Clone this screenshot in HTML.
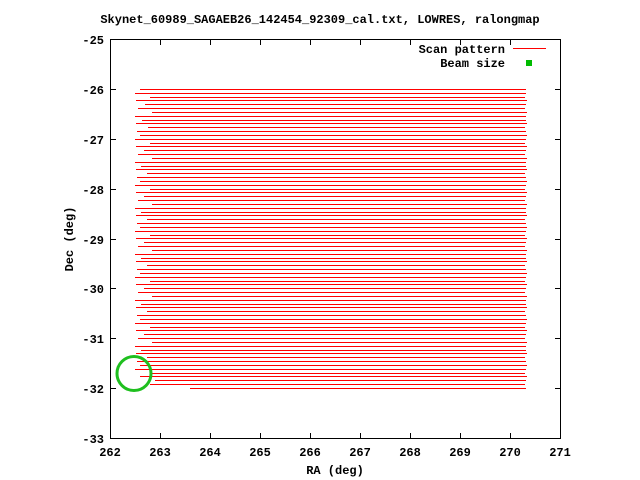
<!DOCTYPE html>
<html><head><style>
html,body{margin:0;padding:0;background:#fff;}
svg{display:block;}
text{font-family:"Liberation Mono","DejaVu Sans Mono",monospace;font-weight:bold;font-size:12px;fill:#000;}
</style></head><body>
<svg width="640" height="480" xmlns="http://www.w3.org/2000/svg">
<text x="320" y="23" text-anchor="middle" font-size="11">Skynet_60989_SAGAEB26_142454_92309_cal.txt, LOWRES, ralongmap</text>
<path stroke="#f00" stroke-width="1" fill="none" d="
M140 89.5H526M135 93.5H526M150 97.5H525M136 100.5H527M145 104.5H526M138 108.5H525M152 112.5H527M135 116.5H526M142 120.5H526M136 123.5H527
M148 127.5H525M137 131.5H526M140 135.5H527M135 139.5H526M150 143.5H525M136 146.5H527M144 150.5H526M138 154.5H525M152 158.5H527M135 162.5H526
M141 166.5H526M136 169.5H527M147 173.5H525M137 177.5H526M140 181.5H527M135 185.5H526M150 189.5H525M136 192.5H527M144 196.5H526M138 200.5H525
M152 204.5H527M135 208.5H526M141 212.5H526M136 215.5H527M147 219.5H525M137 223.5H526M140 227.5H527M135 231.5H526M150 235.5H525M136 238.5H527
M144 242.5H526M138 246.5H525M152 250.5H527M135 254.5H526M141 258.5H526M136 261.5H527M147 265.5H525M137 269.5H526M140 273.5H527M135 277.5H526
M150 281.5H525M136 284.5H527M144 288.5H526M138 292.5H525M152 296.5H527M135 300.5H526M141 304.5H526M136 307.5H527M147 311.5H525M137 315.5H526
M140 319.5H527M135 323.5H526M150 327.5H525M136 330.5H527M144 334.5H526M138 338.5H525M152 342.5H527M135 346.5H526M141 350.5H526M136 353.5H527
M147 357.5H525M137 361.5H526M140 365.5H527M135 369.5H526M150 373.5H525M140 376.5H527M155 380.5H526M150 384.5H525M190 388.5H526"/>
<g stroke="#000" stroke-width="1" fill="none">
<rect x="110.5" y="39.5" width="450" height="399"/>
<path d="M160.5 438v-5M210.5 438v-5M260.5 438v-5M310.5 438v-5M360.5 438v-5M410.5 438v-5M460.5 438v-5M510.5 438v-5
M160.5 40v5M210.5 40v5M260.5 40v5M310.5 40v5M360.5 40v5M410.5 40v5M460.5 40v5M510.5 40v5
M111 89.5h5M111 139.5h5M111 189.5h5M111 239.5h5M111 288.5h5M111 338.5h5M111 388.5h5
M560 89.5h-5M560 139.5h-5M560 189.5h-5M560 239.5h-5M560 288.5h-5M560 338.5h-5M560 388.5h-5"/>
</g>
<g text-anchor="end">
<text x="104" y="44">-25</text><text x="104" y="94">-26</text><text x="104" y="144">-27</text>
<text x="104" y="194">-28</text><text x="104" y="244">-29</text><text x="104" y="293">-30</text>
<text x="104" y="343">-31</text><text x="104" y="393">-32</text><text x="104" y="443">-33</text>
</g>
<g text-anchor="middle">
<text x="110" y="456">262</text><text x="160" y="456">263</text><text x="210" y="456">264</text>
<text x="260" y="456">265</text><text x="310" y="456">266</text><text x="360" y="456">267</text>
<text x="410" y="456">268</text><text x="460" y="456">269</text><text x="510" y="456">270</text>
<text x="560" y="456">271</text>
<text x="335" y="474" font-size="11">RA (deg)</text>
<text x="0" y="0" font-size="11" transform="translate(73,239) rotate(-90)">Dec (deg)</text>
</g>
<text x="505" y="53" text-anchor="end" font-size="11">Scan pattern</text>
<text x="505" y="67" text-anchor="end" font-size="11">Beam size</text>
<line x1="513" y1="48.5" x2="546" y2="48.5" stroke="#f00" stroke-width="1"/>
<rect x="526" y="60" width="6" height="6" fill="#0b0"/>
<circle cx="134" cy="373.5" r="17" fill="none" stroke="#1fbf1f" stroke-width="3"/>
</svg>
</body></html>
